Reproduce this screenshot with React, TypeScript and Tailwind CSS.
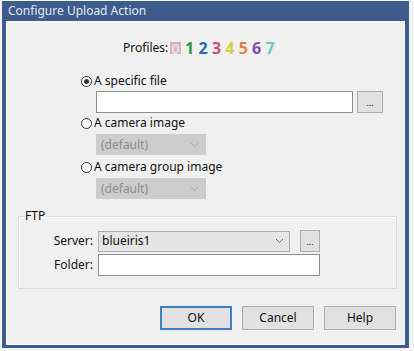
import React from "react";

const font = { fontFamily: '"Noto Sans", "Liberation Sans", sans-serif' };

const Chevron = ({ color }: { color: string }) => (
  <svg width="9" height="6" viewBox="0 0 9 6" className="shrink-0">
    <path d="M1 1 L4.5 4.5 L8 1" fill="none" stroke={color} strokeWidth="1" />
  </svg>
);

const Radio = ({ checked, label }: { checked?: boolean; label: string }) => (
  <div className="flex h-[16px] items-center gap-[2px] pl-[74px] text-[12px] text-[#111]">
    <span className="flex h-[11px] w-[11px] items-center justify-center rounded-full border border-[#333] bg-white">
      {checked && <span className="h-[5px] w-[5px] rounded-full bg-[#333]" />}
    </span>
    <span className="leading-none">{label}</span>
  </div>
);

const DisabledSelect = () => (
  <div className="ml-[89px] flex h-[21px] w-[110px] items-center justify-between border border-[#cccccc] bg-[#cccccc] pl-[4px] pr-[6px] text-[12px] text-[#8c8c8c]">
    <span>(default)</span>
    <Chevron color="#a8a8a8" />
  </div>
);

const DotsButton = ({ w }: { w: string }) => (
  <div className={`flex h-[22px] ${w} items-end justify-center border border-[#adadad] bg-[#e1e1e1] pb-[5px] text-[9px] leading-none text-black`}>
    ...
  </div>
);

const profiles = [
  { n: "1", c: "text-[#2f9a3c]" },
  { n: "2", c: "text-[#2a68ad]" },
  { n: "3", c: "text-[#c9516b]" },
  { n: "4", c: "text-[#d6cf45]" },
  { n: "5", c: "text-[#e08049]" },
  { n: "6", c: "text-[#7d4fa6]" },
  { n: "7", c: "text-[#6cc9c9]" },
];

export default function App() {
  return (
    <div className="h-[351px] w-[414px] bg-[#f4f4f4] pl-[2px] pt-[1px]" style={font}>
      <div className="flex h-[347px] w-[407px] flex-col bg-[#3c5c8c] px-[4px] pb-[3px]">
        <div className="flex h-[20px] shrink-0 items-center pl-[2px] text-[12px] text-[#e3e9f1]">
          Configure Upload Action
        </div>
        <div className="flex flex-1 flex-col border border-white bg-[#f0f0f0]">
          {/* profiles */}
          <div className="mt-[18px] flex h-[16px] items-center pl-[116px] text-[12px] text-[#111]">
            <span className="w-[46px]">Profiles:</span>
            <span className="ml-[1px] flex h-[12px] w-[11px] items-center justify-center bg-[#d3b3bb] text-[15px] font-bold leading-none text-[#eadde0]">
              0
            </span>
            <div className="ml-[2px] flex">
              {profiles.map((p) => (
                <span
                  key={p.n}
                  className={`w-[13.4px] text-center text-[16px] font-bold leading-none ${p.c}`}
                >
                  {p.n}
                </span>
              ))}
            </div>
          </div>

          <div className="mt-[17px]">
            <Radio checked label="A specific file" />
          </div>
          <div className="mt-[2px] flex gap-[4px] pl-[89px]">
            <div className="h-[22px] w-[257px] border border-[#8f8f8f] bg-white" />
            <DotsButton w="w-[26px]" />
          </div>

          <div className="mt-[2px]">
            <Radio label="A camera image" />
          </div>
          <div className="mt-[3px]">
            <DisabledSelect />
          </div>

          <div className="mt-[4px]">
            <Radio label="A camera group image" />
          </div>
          <div className="mt-[3px]">
            <DisabledSelect />
          </div>

          {/* FTP group */}
          <div className="relative ml-[11px] mr-[7px] mt-[17px] h-[73px] border border-[#dcdcdc] shadow-[inset_1px_1px_0_#ffffff]">
            <span className="absolute left-[5px] top-[-9px] bg-[#f0f0f0] px-[1px] text-[12px] leading-[16px] text-[#111]">
              FTP
            </span>
            <div className="mt-[13px] flex items-center">
              <span className="w-[74px] text-right text-[12px] text-[#111]">Server:</span>
              <div className="ml-[5px] flex h-[21px] w-[192px] items-center justify-between border border-[#acacac] bg-[#e5e5e5] pl-[3px] pr-[5px] text-[12px] text-[#111]">
                <span>blueiris1</span>
                <Chevron color="#6f6f6f" />
              </div>
              <div className="ml-[10px]">
                <DotsButton w="w-[20px]" />
              </div>
            </div>
            <div className="mt-[2px] flex items-center">
              <span className="w-[74px] text-right text-[12px] text-[#111]">Folder:</span>
              <div className="ml-[5px] h-[22px] w-[222px] border border-[#8f8f8f] bg-white" />
            </div>
          </div>

          {/* buttons */}
          <div className="mt-[17px] flex justify-end gap-[10px] pr-[8px] text-[12px] text-[#111]">
            <div className="flex h-[24px] w-[72px] items-center justify-center border border-[#3f7fc4] bg-[#e1e1e1] shadow-[inset_0_0_0_1px_#3f7fc4]">
              OK
            </div>
            <div className="flex h-[24px] w-[72px] items-center justify-center border border-[#adadad] bg-[#e1e1e1]">
              Cancel
            </div>
            <div className="flex h-[24px] w-[72px] items-center justify-center border border-[#adadad] bg-[#e1e1e1]">
              Help
            </div>
          </div>
        </div>
      </div>
    </div>
  );
}
